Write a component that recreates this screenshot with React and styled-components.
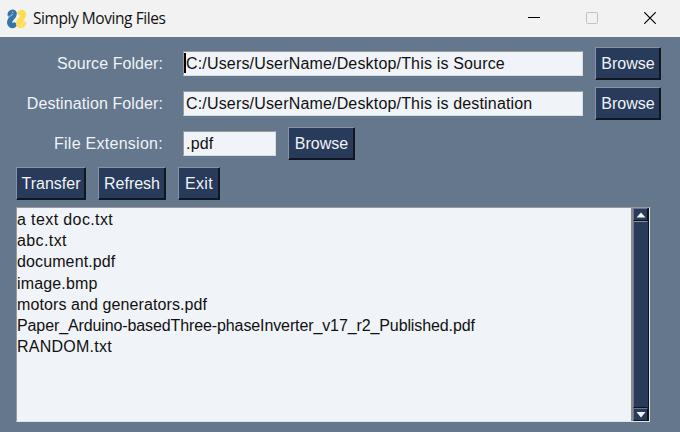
import React from "react";
import styled, { createGlobalStyle } from "styled-components";

const Global = createGlobalStyle`
  * { box-sizing: border-box; }
  body { margin: 0; overflow: hidden; }
`;

const Window = styled.div`
  width: 680px;
  height: 432px;
  display: flex;
  flex-direction: column;
  background: #64778d;
  font: 16px/21px "Liberation Sans", Arial, sans-serif;
`;

const TitleBar = styled.header`
  height: 37px;
  flex: none;
  display: flex;
  align-items: center;
  padding-left: 7px;
  background: #f2f2f2;
  color: #111;
`;

const Title = styled.h1`
  flex: 1;
  margin: -2px 0 0 6px;
  font: 400 15.5px/20px "Open Sans", "Noto Sans", sans-serif;
  letter-spacing: -0.44px;
  white-space: nowrap;
`;

const Controls = styled.div`
  display: flex;
  gap: 46px;
  margin: -1px 24px 0 0;
  svg { display: block; }
`;

const Content = styled.main`
  padding: 10px 18px 10px 16px;
`;

const Row = styled.div`
  display: flex;
  align-items: center;
  height: 33px;
  margin-bottom: 7px;
`;

const Label = styled.label`
  flex: none;
  width: 147px;
  margin-right: 20px;
  text-align: right;
  color: #f0f3f7;
  white-space: nowrap;
  letter-spacing: ${(p) => p.$track || 0}px;
`;

const Field = styled.div`
  flex: none;
  width: ${(p) => p.$width}px;
  height: 25px;
  margin-right: 12px;
  padding-left: 2px;
  display: flex;
  align-items: center;
  border: 1px solid;
  border-color: #9a9a9a #d5dce2 #d5dce2 #9a9a9a;
  background: #f0f3f7;
  color: #111;
  white-space: nowrap;
  letter-spacing: ${(p) => p.$track || 0}px;
`;

const Caret = styled.span`
  width: 2px;
  height: 20px;
  margin: 0 0 1px -2px;
  background: #000;
`;

const Button = styled.button`
  flex: none;
  width: ${(p) => p.$width}px;
  height: 33px;
  margin: 0 12px 0 0;
  padding: 0;
  font: inherit;
  color: #f0f3f7;
  background: #283b5b;
  border: 1px solid;
  border-color: #8793a5 #101722 #101722 #8793a5;
  box-shadow: inset -1px -1px #101722;
  letter-spacing: ${(p) => p.$track || 0}px;
`;

const ListBox = styled.section`
  width: 634px;
  height: 215px;
  display: flex;
  border: 1px solid;
  border-color: #9a9a9a #dce6eb #dce6eb #9a9a9a;
  background: #f0f3f7;
`;

const Files = styled.ul`
  flex: 1;
  margin: 0;
  padding: 1px 0 0;
  list-style: none;
  color: #111;
`;

const File = styled.li`
  height: 21.2px;
  white-space: nowrap;
  letter-spacing: ${(p) => p.$track || 0}px;
`;

const ScrollBar = styled.div`
  width: 18px;
  display: flex;
  flex-direction: column;
  background: #283b5b;
  border-left: 2px solid #8b8b8b;
  border-right: 1px solid #111;
`;

const Arrow = styled.div`
  height: 13px;
  display: flex;
  align-items: center;
  justify-content: center;
  border: 1px solid;
  border-color: #68778e #111 #111 #68778e;
`;

const Thumb = styled.div`
  flex: 1;
  border: 1px solid;
  border-color: #8793a5 #283b5b #111 #68778e;
`;

const Logo = () => (
  <svg width="20" height="20" viewBox="0 0 20 20" fill="none" strokeLinecap="round" strokeLinejoin="round">
    <path stroke="#3474a6" strokeWidth="5.2" d="M3.2 6.2C2.8 3.4 6.6 2 7.2 4.2c.6 2.2-2.2 4.3-3.4 6-1.2 1.8-2 4.6.2 6 1 .6 2.2.3 3-.2" />
    <path stroke="#ffdc52" strokeWidth="5.2" d="M13.2 3.8c1.3-.9 3.2-.3 3.4 1.5.3 2.5-2.8 4.4-4 6.4-1 1.8-1.8 3.8.2 4.6 1.6.6 3.4-.2 3.8-2" />
    <path stroke="#f2f2f2" strokeWidth=".7" d="M1 7.4c2.2.2 4-1 4.8-2.4M19 13c-2.2-.2-4 .9-4.8 2.3" />
    <circle cx="5.7" cy="3" r=".6" fill="#f2f2f2" />
    <circle cx="14.6" cy="17.4" r=".6" fill="#f2f2f2" />
  </svg>
);

const ArrowIcon = ({ down }) => (
  <svg width="10" height="6" viewBox="0 0 10 6">
    <path fill="#f0f3f7" d={down ? "M.5 0h9L5 5.5Z" : "M.5 5.5h9L5 .5Z"} />
  </svg>
);

const files = [
  ["a text doc.txt", 0.39],
  ["abc.txt", 0.4],
  ["document.pdf", 0.12],
  ["image.bmp", 0.15],
  ["motors and generators.pdf", 0.1],
  ["Paper_Arduino-basedThree-phaseInverter_v17_r2_Published.pdf", -0.11],
  ["RANDOM.txt", 0.25],
];

export default function App() {
  return (
    <Window>
      <Global />
      <TitleBar>
        <Logo />
        <Title>Simply Moving Files</Title>
        <Controls>
          <svg width="12" height="12"><path stroke="#000" d="M0 5.5h12" /></svg>
          <svg width="12" height="12"><rect x=".5" y=".5" width="11" height="11" rx="1" fill="none" stroke="#c3c3c3" /></svg>
          <svg width="12" height="12"><path stroke="#000" strokeWidth="1.2" d="m.3.3 11.4 11.4M11.7.3.3 11.7" /></svg>
        </Controls>
      </TitleBar>
      <Content>
        <Row>
          <Label $track={0.08}>Source Folder:</Label>
          <Field $width={400} $track={0.17}><Caret />C:/Users/UserName/Desktop/This is Source</Field>
          <Button $width={66}>Browse</Button>
        </Row>
        <Row>
          <Label $track={0.1}>Destination Folder:</Label>
          <Field $width={400} $track={0.17}>C:/Users/UserName/Desktop/This is destination</Field>
          <Button $width={66}>Browse</Button>
        </Row>
        <Row>
          <Label $track={0.27}>File Extension:</Label>
          <Field $width={93} $track={0.2}>.pdf</Field>
          <Button $width={67}>Browse</Button>
        </Row>
        <Row>
          <Button $width={70}>Transfer</Button>
          <Button $width={68}>Refresh</Button>
          <Button $width={42} $track={0.3}>Exit</Button>
        </Row>
        <ListBox>
          <Files>
            {files.map(([name, track]) => <File key={name} $track={track}>{name}</File>)}
          </Files>
          <ScrollBar>
            <Arrow><ArrowIcon /></Arrow>
            <Thumb />
            <Arrow><ArrowIcon down /></Arrow>
          </ScrollBar>
        </ListBox>
      </Content>
    </Window>
  );
}
